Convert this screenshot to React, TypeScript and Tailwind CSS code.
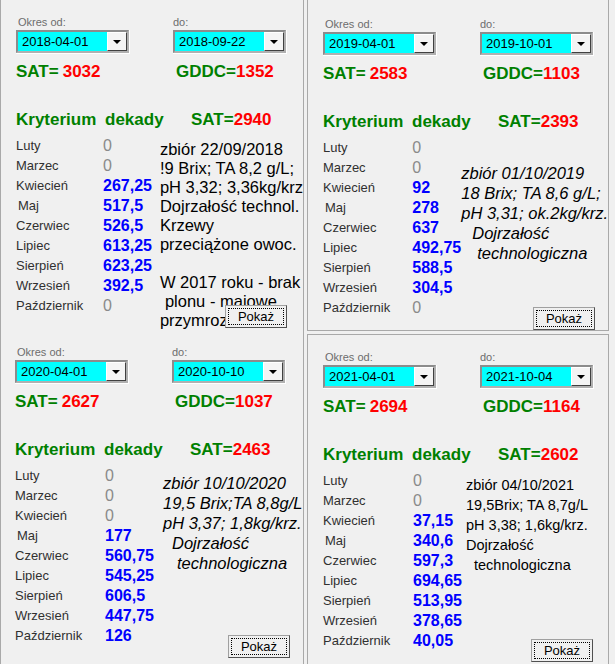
import React from "react";

type Panel = {
  from: string;
  to: string;
  sat: string;
  gddc: string;
  ksat: string;
  values: string[];
  note: { t: string; cls: string }[];
  noteCls: string;
  pad: string;
  cell: string;
  btn: string;
};

const months = [
  "Luty",
  "Marzec",
  "Kwiecień",
  "Maj",
  "Czerwiec",
  "Lipiec",
  "Sierpień",
  "Wrzesień",
  "Październik",
];

const panels: Panel[] = [
  {
    from: "2018-04-01",
    to: "2018-09-22",
    sat: "3032",
    gddc: "1352",
    ksat: "2940",
    values: ["0", "0", "267,25", "517,5", "526,5", "613,25", "623,25", "392,5", "0"],
    note: [
      { t: "zbiór 22/09/2018", cls: "" },
      { t: "!9 Brix; TA 8,2 g/L;", cls: "" },
      { t: "pH 3,32; 3,36kg/krz", cls: "" },
      { t: "Dojrzałość technol.", cls: "" },
      { t: "Krzewy", cls: "" },
      { t: "przeciążone owoc.", cls: "" },
      { t: "\u00a0", cls: "" },
      { t: "W 2017 roku - brak", cls: "" },
      { t: "plonu - majowe", cls: "pl-[5px]" },
      { t: "przymrozki", cls: "" },
    ],
    noteCls: "pl-[8px] pt-[4px] text-[16.5px] leading-[19px]",
    pad: "pt-[15px] pl-[15px]",
    cell: "w-[304px] h-[331px] border-l border-r border-[#a9a9a9]",
    btn: "left-[224px] top-[305px]",
  },
  {
    from: "2019-04-01",
    to: "2019-10-01",
    sat: "2583",
    gddc: "1103",
    ksat: "2393",
    values: ["0", "0", "92", "278", "637", "492,75", "588,5", "304,5", "0"],
    note: [
      { t: "zbiór 01/10/2019", cls: "" },
      { t: "18 Brix; TA 8,6 g/L;", cls: "" },
      { t: "pH 3,31; ok.2kg/krz.", cls: "" },
      { t: "Dojrzałość", cls: "pl-[11px]" },
      { t: "technologiczna", cls: "pl-[16px]" },
    ],
    noteCls: "pl-[0px] pt-[25px] text-[16.5px] leading-[20px] italic",
    pad: "pt-[17px] pl-[15px]",
    cell: "w-[302px] h-[331px] border-l border-r border-b border-[#a9a9a9]",
    btn: "left-[225px] top-[307px]",
  },
  {
    from: "2020-04-01",
    to: "2020-10-10",
    sat: "2627",
    gddc: "1037",
    ksat: "2463",
    values: ["0", "0", "0", "177", "560,75", "545,25", "606,5", "447,75", "126"],
    note: [
      { t: "zbiór 10/10/2020", cls: "" },
      { t: "19,5 Brix;TA 8,8g/L", cls: "" },
      { t: "pH 3,37; 1,8kg/krz.", cls: "" },
      { t: "Dojrzałość", cls: "pl-[9px]" },
      { t: "technologiczna", cls: "pl-[14px]" },
    ],
    noteCls: "pl-[9px] pt-[7px] text-[16.5px] leading-[20px] italic",
    pad: "pt-[14px] pl-[14px]",
    cell: "w-[304px] h-[333px] border-l border-r border-[#a9a9a9]",
    btn: "left-[227px] top-[304px]",
  },
  {
    from: "2021-04-01",
    to: "2021-10-04",
    sat: "2694",
    gddc: "1164",
    ksat: "2602",
    values: ["0", "0", "37,15", "340,6", "597,3", "694,65", "513,95", "378,65", "40,05"],
    note: [
      { t: "zbiór 04/10/2021", cls: "" },
      { t: "19,5Brix; TA 8,7g/L", cls: "" },
      { t: "pH 3,38; 1,6kg/krz.", cls: "" },
      { t: "Dojrzałość", cls: "" },
      { t: "technologiczna", cls: "pl-[8px]" },
    ],
    noteCls: "pl-[4px] pt-[4px] text-[14.5px] leading-[20px]",
    pad: "pt-[15px] pl-[15px]",
    cell: "mt-[3px] w-[302px] h-[330px] border-l border-r border-t border-[#a9a9a9]",
    btn: "left-[223px] top-[304px]",
  },
];

function Combo({ value }: { value: string }) {
  return (
    <div className="w-[114px] h-[24px] border-r border-b border-white">
      <div className="w-full h-full flex border-2 border-t-[#8c8c8c] border-l-[#8c8c8c] border-r-[#b0b0b0] border-b-[#b0b0b0]">
        <div className="flex-1 bg-[#00ffff] text-[13px] leading-[19px] pl-[4px] text-black">{value}</div>
        <div className="w-[20px] h-full bg-[#f4f4f4] border-l border-t border-white border-r border-r-[#404040] border-b border-b-[#404040] flex items-center justify-center">
          <div className="w-0 h-0 border-l-[4px] border-r-[4px] border-t-[4px] border-l-transparent border-r-transparent border-t-black" />
        </div>
      </div>
    </div>
  );
}

function PanelView({ p }: { p: Panel }) {
  return (
    <div className={`relative bg-[#f0f0f0] ${p.cell}`}>
      <div className={p.pad}>
        <div className="flex h-[14px] text-[11px] leading-[14px] text-[#6d6d6d]">
          <div className="w-[157px] pl-[2px]">Okres od:</div>
          <div>do:</div>
        </div>
        <div className="mt-[1px] flex gap-[43px]">
          <Combo value={p.from} />
          <Combo value={p.to} />
        </div>
        <div className="mt-[8px] flex h-[20px] text-[17px] leading-[20px] font-bold whitespace-nowrap">
          <div className="w-[160px]">
            <span className="text-[#008000]">SAT=</span>
            <span className="text-[#ff0000] ml-[4px]">{p.sat}</span>
          </div>
          <div>
            <span className="text-[#008000]">GDDC=</span>
            <span className="text-[#ff0000]">{p.gddc}</span>
          </div>
        </div>
        <div className="mt-[28px] flex h-[20px] text-[17px] leading-[20px] font-bold whitespace-nowrap">
          <div className="w-[89px] text-[#008000]">Kryterium</div>
          <div className="w-[86px] text-[#008000]">dekady</div>
          <div>
            <span className="text-[#008000]">SAT=</span>
            <span className="text-[#ff0000]">{p.ksat}</span>
          </div>
        </div>
        <div className="mt-[6px] flex">
          <div className="w-[90px] text-[13px] leading-[20px] text-[#303030]">
            {months.map((m) => (
              <div key={m} className={m === "Maj" ? "h-[20px] pl-[2px]" : "h-[20px]"}>
                {m}
              </div>
            ))}
          </div>
          <div className="w-[49px] text-[16px] leading-[20px] whitespace-nowrap">
            {p.values.map((v, i) => (
              <div
                key={i}
                className={v === "0" ? "h-[20px] text-[#8a8a8a]" : "h-[20px] font-bold text-[#0000ff]"}
              >
                {v}
              </div>
            ))}
          </div>
          <div className={`text-black whitespace-nowrap ${p.noteCls}`}>
            {p.note.map((n, i) => (
              <div key={i} className={n.cls}>
                {n.t}
              </div>
            ))}
          </div>
        </div>
      </div>
      <div className={`absolute z-10 w-[62px] h-[23px] bg-[#f0f0f0] border border-t-[#a0a0a0] border-l-[#a0a0a0] border-r-[#505050] border-b-[#505050] p-[2px] ${p.btn}`}>
        <div className="w-full h-full border border-dotted border-black flex items-center justify-center text-[13px] leading-[15px] text-black">
          Pokaż
        </div>
      </div>
    </div>
  );
}

export default function App() {
  return (
    <div
      className="w-[615px] h-[664px] bg-[#f0f0f0] overflow-hidden"
      style={{ fontFamily: '"Liberation Sans", Arial, sans-serif' }}
    >
      <div className="grid grid-cols-[307px_308px] grid-rows-[331px_333px]">
        <PanelView p={panels[0]} />
        <PanelView p={panels[1]} />
        <PanelView p={panels[2]} />
        <PanelView p={panels[3]} />
      </div>
    </div>
  );
}
